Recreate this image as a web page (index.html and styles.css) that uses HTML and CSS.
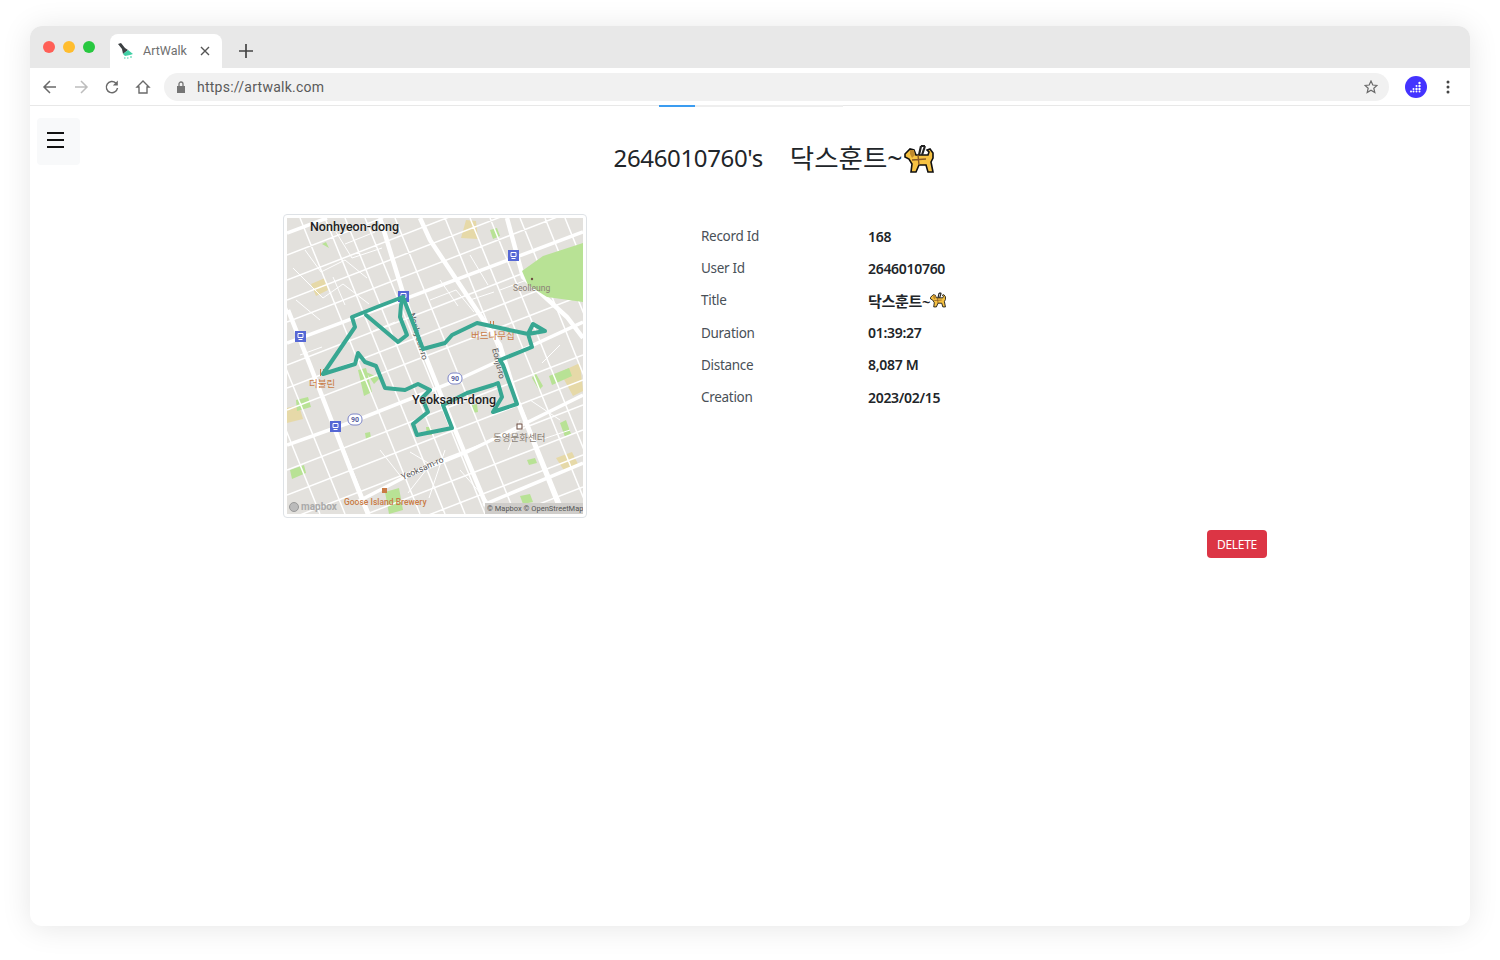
FILE: index.html
```html
<!DOCTYPE html>
<html lang="ko">
<head>
  <meta charset="UTF-8">
  <title>ArtWalk</title>
  <link rel="stylesheet" href="styles.css">
</head>
<body>
  <svg class="defs" width="0" height="0">
    <symbol id="dog" viewBox="0 0 30 30">
      <path class="dog-body" d="M1 10l5-5 4 1 2 5h12l1-3-2-2 3-1 3 4v5l-2 4 2 10h-5l-2-7h-7l-3 7H7l1-8-3-5-4-2z"/>
      <path class="dog-dark" d="M6 6l4 0 1 5-3 3-2-4z"/>
      <path class="dog-band" d="M8 16l14-1M14 11l1 10"/>
      <path class="dog-strap" d="M15 11l2-9M18 11l3-9M17 2h4"/>
    </symbol>
  </svg>

  <div class="window">
    <div class="tabbar">
      <div class="lights">
        <span class="light red"></span>
        <span class="light yellow"></span>
        <span class="light green"></span>
      </div>
      <div class="tab">
        <svg class="favicon" width="16" height="16" viewBox="0 0 16 16">
          <path d="M0 1l3-1 4 5 3 2-5 4-1-5z" fill="#3c4043"/>
          <path d="M5 11l5-4 5 4-3 1-5 1z" fill="#3fcfa4"/>
          <path d="M6 15h1.500M9 15h1.500M12 14h2" stroke="#3fcfa4" stroke-width="1.200"/>
        </svg>
        <span class="tab-title">ArtWalk</span>
        <svg class="tab-close" width="10" height="10" viewBox="0 0 10 10">
          <path d="M1 1l8 8M9 1l-8 8" stroke="#555" stroke-width="1.400"/>
        </svg>
      </div>
      <svg class="new-tab" width="14" height="14" viewBox="0 0 14 14">
        <path d="M7 0v14M0 7h14" stroke="#444" stroke-width="1.700"/>
      </svg>
    </div>

    <div class="toolbar">
      <svg class="nav-icon" width="16" height="16" viewBox="0 0 16 16">
        <path d="M14 8H2M8 2L2 8l6 6" fill="none" stroke="#6a6a6a" stroke-width="1.500"/>
      </svg>
      <svg class="nav-icon" width="16" height="16" viewBox="0 0 16 16">
        <path d="M2 8h12M8 2l6 6-6 6" fill="none" stroke="#bdbdbd" stroke-width="1.500"/>
      </svg>
      <svg class="nav-icon" width="16" height="16" viewBox="0 0 16 16">
        <path d="M13.500 9A5.600 5.600 0 1 1 11.800 4" fill="none" stroke="#6a6a6a" stroke-width="1.500"/>
        <path d="M13.800 1.500v5H8.800z" fill="#6a6a6a"/>
      </svg>
      <svg class="nav-icon" width="16" height="16" viewBox="0 0 16 16">
        <path d="M8 2L2 8h2v6h8V8h2z" fill="none" stroke="#6a6a6a" stroke-width="1.400"/>
      </svg>
      <div class="address">
        <svg width="10" height="12" viewBox="0 0 10 12">
          <path d="M1 5h8v7H1z" fill="#757575"/>
          <path d="M3 5V3a2 2 0 0 1 4 0v2" fill="none" stroke="#757575" stroke-width="1.300"/>
        </svg>
        <span class="url">https://artwalk.com</span>
        <svg class="star" width="14" height="14" viewBox="0 0 14 14">
          <path d="M7 1l1.800 4 4.200.4-3.200 2.800 1 4.300L7 10.200l-3.800 2.300 1-4.300L1 5.400 5.200 5z" fill="none" stroke="#6a6a6a" stroke-width="1.200"/>
        </svg>
      </div>
      <svg class="avatar" width="22" height="22" viewBox="0 0 22 22">
        <circle cx="11" cy="11" r="11" fill="#4433ff"/>
        <g fill="#fff">
          <circle cx="14.500" cy="7" r="1.200"/>
          <circle cx="14.500" cy="10" r="1.200"/><circle cx="11.500" cy="10" r="1"/>
          <circle cx="14.500" cy="13" r="1.200"/><circle cx="11.500" cy="13" r="1.200"/><circle cx="8.500" cy="13" r="1"/>
          <circle cx="14.500" cy="15.500" r="1"/><circle cx="11.500" cy="15.500" r="1"/><circle cx="8.500" cy="15.500" r="1"/><circle cx="6" cy="15.500" r="1"/>
        </g>
      </svg>
      <svg class="kebab" width="4" height="14" viewBox="0 0 4 14">
        <circle cx="2" cy="2" r="1.500" fill="#444"/>
        <circle cx="2" cy="7" r="1.500" fill="#444"/>
        <circle cx="2" cy="12" r="1.500" fill="#444"/>
      </svg>
    </div>

    <div class="progress"><span class="progress-bar"></span></div>

    <main class="page">
      <button class="menu-btn" type="button" aria-label="menu">
        <span></span><span></span><span></span>
      </button>

      <h1 class="heading">
        <span class="heading-user">2646010760's</span>
        <span class="heading-title">닥스훈트~</span>
        <svg class="dog-big"><use href="#dog"/></svg>
      </h1>

      <section class="record">
        <div class="thumb">
          <svg class="map" width="296" height="296" viewBox="287 218 296 296">
            <rect x="287" y="218" width="296" height="296" fill="#e3e1dd"/>

            <!-- small parks -->
            <path class="sand" d="M461 238l5-18 10 1 2 18zM311 284l14-6 3 12-12 6zM556 458l16-6 7 14-14 6zM287 408l12-3 4 14-16 4zM560 372l20-9 3 28-10 5z"/>
            <path class="park" d="M322 244l4-2 3 6zM490 230l7-2 3 8-7 3zM358 370l8-2 6 24-8 4zM366 372l14 6-6 6zM549 376l20-8 3 8-20 9zM535 372l8 14-4 4-7-12zM296 400l12-3 3 10-14 4zM560 423l6-3 5 14-6 3zM290 470l14-5 2 8-14 6zM385 492l14-4 4 22-14 4zM520 496l10-2 3 8-10 2zM527 460l8-2 2 5-8 2zM365 433l5-1 1 6-5 1zM472 405l5-1 1 8-5 1zM426 427l5 0 1 8-5 0z"/>

            <!-- minor streets -->
            <path class="street" d="M287 255L583 140M287 280L583 165M287 300L583 185M287 322L583 207M287 365L583 250M287 388L583 273M287 410L583 295M287 470L583 355M287 495L583 380M287 520L583 405M287 545L583 430M287 570L583 455M287 602L583 487M287 625L583 510M200 218L320 514M225 218L345 514M250 218L370 514M300 218L420 514M325 218L445 514M345 218L465 514M365 218L485 514M395 218L515 514M445 218L565 514M470 218L590 514M490 218L610 514M520 218L640 514M545 218L665 514M565 218L685 514"/>
            <path class="street thin" d="M293 268l30 30 20-14 26 20M305 250l16 22 24-12 22 18M336 232l16 26 30-10M296 300l24 20M345 305l-12-28M375 232l-30 12M430 300l26-10 18 22M440 280l18 26M470 255l18 30M500 290l32-12M530 400l30 20M540 440l30-10M430 465l-22 28M445 450l-16 48M410 452l20 12M380 450l22 28M460 470l30 34M300 355l22-8M470 300l24-8M395 322l-22 9M520 420l-12 30M560 345l-18 18"/>

            <!-- main roads -->
            <path class="road" d="M287 233L327 218M287 343L583 232M287 445L357 420L453 382L583 322M357 502L403 478L467 452L583 395M483 505L583 463"/>
            <path class="road wide" d="M420 218L430 240L500 345L517 400L562 514M380 218L403 293L423 350L453 425L490 514M288 310L310 365L363 502L368 514M507 218L523 277L567 317L583 338"/>

            <!-- big park, no streets inside it -->
            <path class="park" d="M522 271l21-15 40-13v59l-36-5-19-12z"/>

            <!-- labels under the route -->
            <text class="map-label road-name" transform="translate(409 314) rotate(74)">Nonhyeon-ro</text>
            <text class="map-label road-name" transform="translate(492 349) rotate(76)">Eonju-ro</text>
            <text class="map-label road-name" transform="translate(403 480) rotate(-24)">Yeoksam-ro</text>
            <text class="map-label muted" x="513" y="291">Seolleung</text>
            <text class="map-label poi-ko" x="471" y="339">버드나무집</text>
            <text class="map-label poi-ko" x="309" y="387">더불린</text>
            <text class="map-label muted-ko" x="493" y="441">동영문화센터</text>
            <text class="map-label poi" x="344" y="505">Goose Island Brewery</text>

            <!-- stations -->
            <g class="station"><rect x="508" y="250" width="11" height="11"/><path d="M511 252.500h5v4h-5zM511.500 258.500h4"/></g>
            <g class="station"><rect x="398" y="291" width="11" height="11"/><path d="M401 293.500h5v4h-5zM401.500 299.500h4"/></g>
            <g class="station"><rect x="295" y="331" width="11" height="11"/><path d="M298 333.500h5v4h-5zM298.500 339.500h4"/></g>
            <g class="station"><rect x="330" y="421" width="11" height="11"/><path d="M333 423.500h5v4h-5zM333.500 429.500h4"/></g>

            <!-- shields -->
            <g class="shield"><rect x="448" y="373" width="14" height="11" rx="5"/><text x="455" y="381">90</text></g>
            <g class="shield"><rect x="348" y="414" width="14" height="11" rx="5"/><text x="355" y="422">90</text></g>

            <!-- small poi marks -->
            <path class="poi-mark" d="M320 369h1v7h-1zM323 369h1v7h-1zM490 321h1v6h-1zM493 321h1v6h-1zM382 488h5v5h-5z"/>
            <rect class="poi-box" x="517" y="424" width="5" height="5"/>
            <circle cx="532" cy="279" r="1.200" fill="#6d4c41"/>

            <!-- route -->
            <path class="route" d="M323 374L355 364L358 353L365 362L376 366L385 388L405 390L418 384L430 390L422 398L428 412L413 424L417 435L452 428L443 405L467 393L493 385L498 383L502 397L493 412L517 404L503 365L500 360L532 347L528 334L545 331L533 324L528 334L477 323L452 335L445 343L423 349L406 305L403 297L377 307L352 317L355 327L323 374"/>
            <path class="route" d="M366 315L398 342L407 335L400 317L401 305L403 297"/>

            <!-- labels over the route -->
            <text class="map-label place" x="310" y="231">Nonhyeon-dong</text>
            <text class="map-label place" x="412" y="404">Yeoksam-dong</text>

            <text class="map-label logo" x="301" y="510">mapbox</text>
            <circle class="logo-mark" cx="294" cy="507" r="4.500"/>
            <rect class="attrib-bg" x="485" y="503" width="98" height="11"/>
            <text class="map-label attrib" x="487" y="511">© Mapbox © OpenStreetMap</text>
          </svg>
        </div>

        <dl class="info">
          <div class="info-row"><dt>Record Id</dt><dd>168</dd></div>
          <div class="info-row"><dt>User Id</dt><dd>2646010760</dd></div>
          <div class="info-row"><dt>Title</dt><dd><span class="ko">닥스훈트~</span><svg class="dog-small"><use href="#dog"/></svg></dd></div>
          <div class="info-row"><dt>Duration</dt><dd>01:39:27</dd></div>
          <div class="info-row"><dt>Distance</dt><dd>8,087 M</dd></div>
          <div class="info-row"><dt>Creation</dt><dd>2023/02/15</dd></div>
        </dl>
      </section>

      <div class="actions">
        <button class="delete-btn" type="button">DELETE</button>
      </div>
    </main>
  </div>
</body>
</html>
```

FILE: styles.css
```css
* {
  box-sizing: border-box;
}
body {
  margin: 0;
  padding: 26px 30px 34px;
  background: #fff;
  font-family: "Noto Sans", "Noto Sans CJK KR", sans-serif;
}
.defs {
  position: absolute;
}
.window {
  width: 1440px;
  height: 900px;
  border-radius: 12px;
  background: #fff;
  box-shadow: 0 2px 30px rgba(0, 0, 0, 0.1);
  overflow: hidden;
}

/* browser chrome */
.tabbar {
  height: 42px;
  background: #e8e8e8;
  display: flex;
  align-items: flex-end;
}
.lights {
  display: flex;
  gap: 8px;
  align-self: flex-start;
  margin: 15px 0 0 13px;
}
.light {
  width: 12px;
  height: 12px;
  border-radius: 50%;
}
.red { background: #ff5f57; }
.yellow { background: #ffbd2e; }
.green { background: #28c840; }
.tab {
  width: 112px;
  height: 34px;
  margin-left: 15px;
  padding: 0 12px 0 8px;
  background: #fff;
  border-radius: 8px 8px 0 0;
  display: flex;
  align-items: center;
}
.tab-title {
  margin-left: 9px;
  font-family: Roboto, sans-serif;
  font-size: 12.5px;
  line-height: 15px;
  padding-bottom: 1px;
  color: #6f6f6f;
}
.tab-close {
  margin-left: auto;
}
.new-tab {
  margin: 0 0 10px 17px;
}
.toolbar {
  height: 38px;
  padding: 0 20px 0 12px;
  border-bottom: 1px solid #e8e8e8;
  display: flex;
  align-items: center;
}
.nav-icon {
  margin-right: 15px;
}
.address {
  flex: 1;
  height: 28px;
  margin: 0 16px 0 -2px;
  padding: 0 11px 0 12px;
  background: #f1f1f1;
  border-radius: 14px;
  display: flex;
  align-items: center;
}
.url {
  margin-left: 11px;
  font-family: Roboto, sans-serif;
  font-size: 14px;
  letter-spacing: 0.25px;
  color: #5a5a5a;
}
.star {
  margin-left: auto;
}
.kebab {
  margin-left: 19px;
}
.progress {
  width: 184px;
  height: 2px;
  margin: -1px 0 0 629px;
  background: #eee;
}
.progress-bar {
  display: block;
  width: 36px;
  height: 2px;
  background: #3b9cf0;
}

/* page */
.page {
  position: relative;
}
.menu-btn {
  position: absolute;
  top: 11px;
  left: 7px;
  width: 43px;
  height: 47px;
  padding: 0 16px 4px 10px;
  background: #f8f9fa;
  border: none;
  border-radius: 4px;
  display: flex;
  flex-direction: column;
  justify-content: center;
  gap: 5px;
}
.menu-btn span {
  display: block;
  height: 2px;
  background: #111;
}
.heading {
  margin: 0;
  padding: 35px 0 0 48px;
  height: 107px;
  font-size: 24px;
  font-weight: 400;
  line-height: 32px;
  color: #212529;
  display: flex;
  justify-content: center;
  align-items: flex-start;
}
.heading-user {
  letter-spacing: -0.35px;
}
.heading-title {
  margin-left: 27px;
  font-size: 26.5px;
}
.dog-big {
  width: 30px;
  height: 30px;
  margin: 2px 0 0 2px;
}
.record {
  display: flex;
  align-items: flex-start;
  margin-left: 253px;
}
.thumb {
  width: 304px;
  height: 304px;
  padding: 3px;
  border: 1px solid #dee2e6;
  border-radius: 4px;
}
.map {
  display: block;
}
.info {
  margin: 6px 0 0 114px;
}
.info-row {
  display: flex;
  height: 32.2px;
  align-items: center;
}
.info-row dt {
  width: 167px;
  font-size: 13.5px;
  letter-spacing: -0.3px;
  color: #495057;
}
.info-row dd {
  margin: 0;
  font-size: 14px;
  font-weight: 600;
  letter-spacing: -0.3px;
  color: #212529;
  display: flex;
  align-items: center;
}
.info-row .ko {
  font-size: 15px;
}
.dog-small {
  width: 16px;
  height: 16px;
}
.actions {
  display: flex;
  justify-content: flex-end;
  margin-top: 12px;
  padding-right: 203px;
}
.delete-btn {
  width: 60px;
  height: 28px;
  padding: 0;
  background: #dc3545;
  color: #fff;
  border: none;
  border-radius: 4px;
  font-family: inherit;
  font-size: 12px;
  letter-spacing: -0.3px;
}

/* dog icon */
.dog-body { fill: #f6c243; stroke: #111; stroke-width: 1.6; }
.dog-dark { fill: #c08a2c; }
.dog-strap { fill: none; stroke: #222; stroke-width: 2.2; }
.dog-band { fill: none; stroke: #8a5a24; stroke-width: 1.4; }

/* map */
.park { fill: #b8e295; }
.sand { fill: #e6d9a8; }
.street { fill: none; stroke: #fff; stroke-width: 1.5; }
.street.thin { stroke-width: 1; }
.road { fill: none; stroke: #fff; stroke-width: 3.5; }
.road.wide { stroke-width: 4.5; }
.route {
  fill: none;
  stroke: #38a792;
  stroke-width: 4;
  stroke-linejoin: round;
  stroke-linecap: round;
}
.map-label {
  font-family: Roboto, "Noto Sans CJK KR", sans-serif;
}
.place {
  font-size: 12.5px;
  font-weight: 500;
  fill: #222;
  stroke: #fff;
  stroke-width: 0.3px;
  paint-order: stroke;
}
.road-name {
  font-size: 8.5px;
  fill: #555;
}
.muted {
  font-size: 8.5px;
  fill: #8a7f75;
}
.muted-ko {
  font-size: 9.5px;
  fill: #8a7f75;
}
.poi {
  font-size: 8.5px;
  font-weight: 500;
  fill: #c97b45;
}
.poi-ko {
  font-size: 9.5px;
  fill: #c97b45;
}
.logo {
  font-size: 10px;
  font-weight: 700;
  fill: #aaa;
}
.logo-mark {
  fill: #bbb;
  stroke: #999;
}
.attrib-bg {
  fill: #cfcdca;
}
.attrib {
  font-size: 7.5px;
  fill: #555;
}
.station rect {
  fill: #5567d5;
}
.station path {
  fill: none;
  stroke: #fff;
  stroke-width: 1;
}
.shield rect {
  fill: #fff;
  stroke: #7d85c8;
}
.shield text {
  font-family: Roboto, sans-serif;
  font-size: 7px;
  font-weight: 700;
  text-anchor: middle;
  fill: #555b9c;
}
.poi-mark { fill: #c97b45; }
.poi-box { fill: none; stroke: #6d4c41; }
```
